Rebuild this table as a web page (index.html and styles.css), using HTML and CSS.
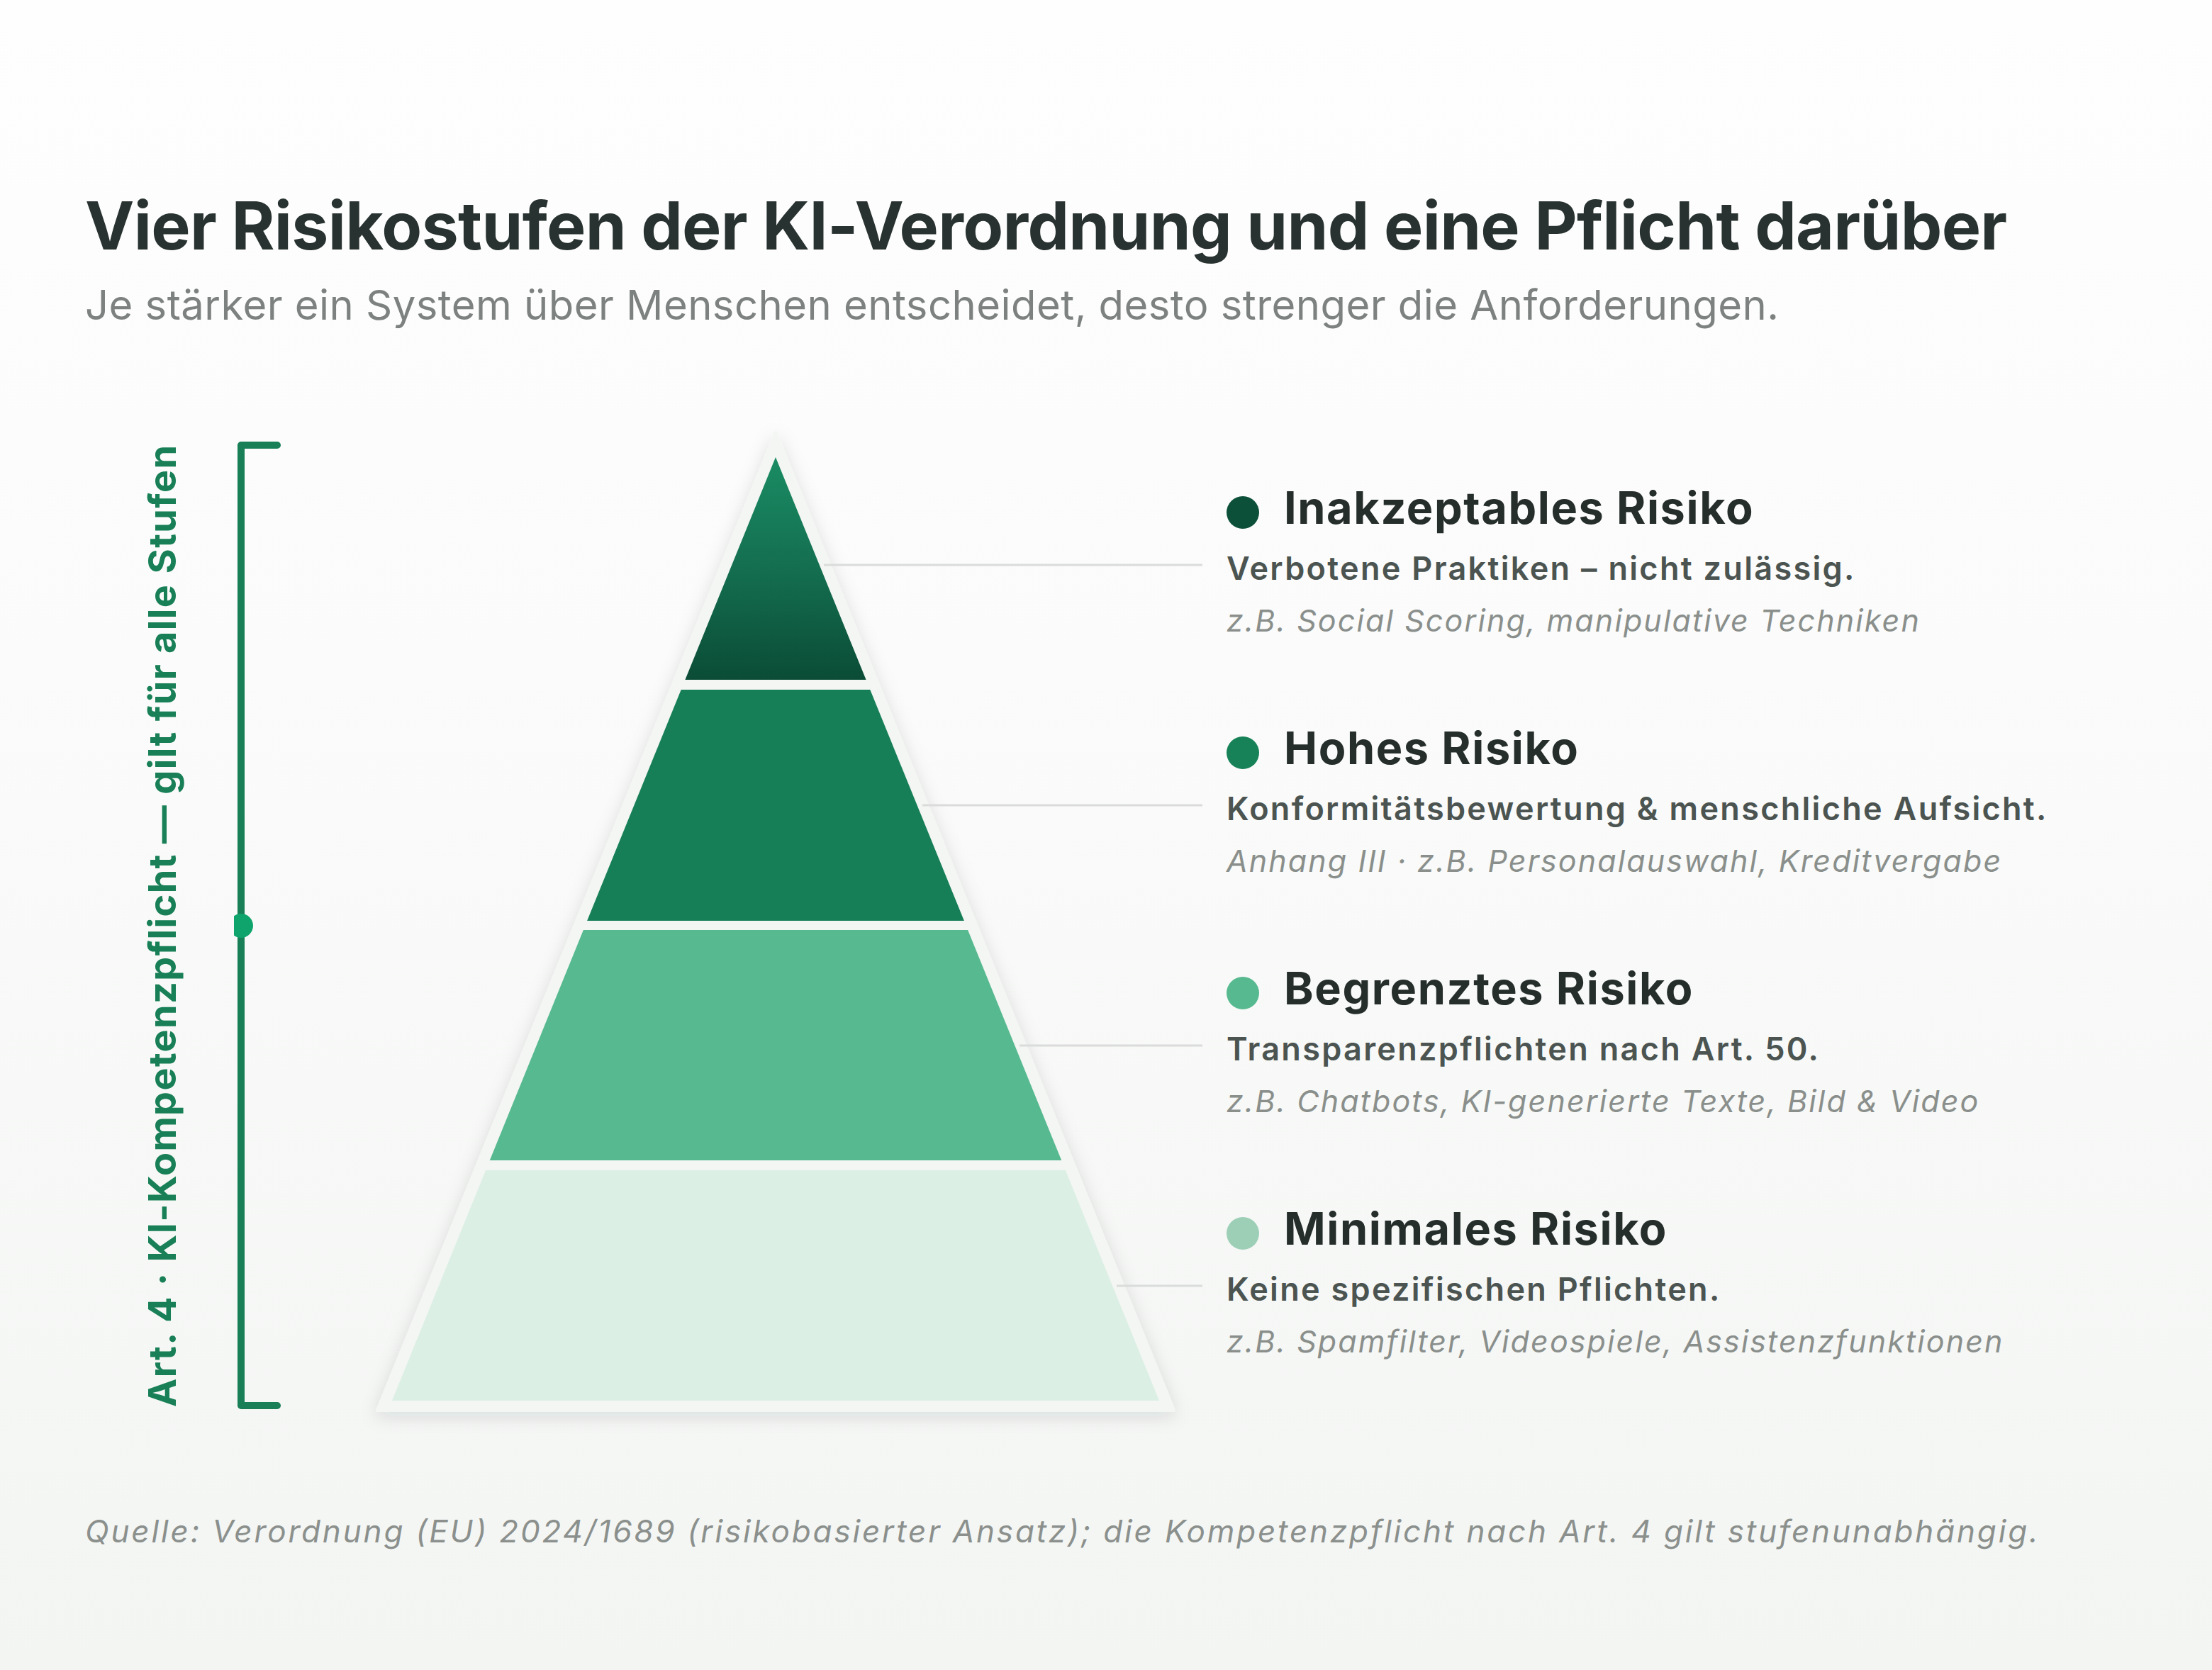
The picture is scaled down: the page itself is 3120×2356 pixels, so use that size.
FILE: index.html
```html
<!DOCTYPE html>
<html lang="de">
<head>
<meta charset="utf-8">
<title>Vier Risikostufen der KI-Verordnung</title>
<link rel="stylesheet" href="styles.css">
</head>
<body>
<div class="page">
  <header class="head">
    <h1 class="title">Vier Risikostufen der KI-Verordnung und eine Pflicht darüber</h1>
    <p class="subtitle">Je stärker ein System über Menschen entscheidet, desto strenger die Anforderungen.</p>
  </header>

  <section class="main">
    <div class="side-label">Art. 4 · KI-Kompetenzpflicht — gilt für alle Stufen</div>

    <svg class="bracket" viewBox="0 0 71 1375" width="71" height="1375" aria-hidden="true">
      <path d="M61 10 H10 V1365 H61" fill="none" stroke="#187f57" stroke-width="10" stroke-linecap="round" stroke-linejoin="round"/>
      <circle cx="10" cy="688" r="17" fill="#0ea46b"/>
    </svg>

    <svg class="pyramid" viewBox="480 590 1240 1440" width="1240" height="1440" aria-hidden="true">
      <defs>
        <linearGradient id="g1" x1="0" y1="645" x2="0" y2="959" gradientUnits="userSpaceOnUse">
          <stop offset="0" stop-color="#1a8c64"/>
          <stop offset="0.55" stop-color="#136b4d"/>
          <stop offset="1" stop-color="#0b4c36"/>
        </linearGradient>
        <filter id="sh" x="-20%" y="-20%" width="140%" height="140%">
          <feDropShadow dx="0" dy="6" stdDeviation="12" flood-color="#1d2b25" flood-opacity="0.13"/>
        </filter>
      </defs>
      <polygon points="1094,610 532,1990 1656,1990" fill="#f3f6f3" stroke="#f3f6f3" stroke-width="4" stroke-linejoin="round" filter="url(#sh)"/>
      <polygon points="1094,645 1221.6,959 966.4,959" fill="url(#g1)"/>
      <polygon points="960.7,973 1227.3,973 1359.9,1299 828.1,1299" fill="#177f58"/>
      <polygon points="822.9,1312 1365.1,1312 1497.2,1637 690.8,1637" fill="#57b98f"/>
      <polygon points="685.1,1651 1502.9,1651 1635,1976 553,1976" fill="#dcefe5"/>
      <g stroke="#d9dcda" stroke-width="3">
        <line x1="1162" y1="797" x2="1696" y2="797"/>
        <line x1="1301" y1="1136" x2="1696" y2="1136"/>
        <line x1="1438" y1="1475" x2="1696" y2="1475"/>
        <line x1="1575" y1="1814" x2="1696" y2="1814"/>
      </g>
    </svg>

    <div class="legend">
      <div class="tier">
        <div class="tier-head"><span class="dot dot-1"></span><span class="tier-name">Inakzeptables Risiko</span></div>
        <p class="tier-desc">Verbotene Praktiken – nicht zulässig.</p>
        <p class="tier-ex">z.B. Social Scoring, manipulative Techniken</p>
      </div>
      <div class="tier">
        <div class="tier-head"><span class="dot dot-2"></span><span class="tier-name">Hohes Risiko</span></div>
        <p class="tier-desc">Konformitätsbewertung &amp; menschliche Aufsicht.</p>
        <p class="tier-ex">Anhang III · z.B. Personalauswahl, Kreditvergabe</p>
      </div>
      <div class="tier">
        <div class="tier-head"><span class="dot dot-3"></span><span class="tier-name">Begrenztes Risiko</span></div>
        <p class="tier-desc">Transparenzpflichten nach Art. 50.</p>
        <p class="tier-ex">z.B. Chatbots, KI-generierte Texte, Bild &amp; Video</p>
      </div>
      <div class="tier">
        <div class="tier-head"><span class="dot dot-4"></span><span class="tier-name">Minimales Risiko</span></div>
        <p class="tier-desc">Keine spezifischen Pflichten.</p>
        <p class="tier-ex">z.B. Spamfilter, Videospiele, Assistenzfunktionen</p>
      </div>
    </div>
  </section>

  <p class="source">Quelle: Verordnung (EU) 2024/1689 (risikobasierter Ansatz); die Kompetenzpflicht nach Art. 4 gilt stufenunabhängig.</p>
</div>
</body>
</html>
```

FILE: styles.css
```css
html, body {
  margin: 0;
  padding: 0;
}

body {
  width: 3120px;
  min-height: 2356px;
  background: linear-gradient(180deg, #fefefe 0%, #fafbfa 40%, #f3f5f3 100%);
  font-family: Inter, "Noto Sans", "DejaVu Sans", sans-serif;
  color: #283230;
}

.page {
  padding: 262px 0 0 120px;
}

.title {
  margin: 0;
  font-size: 93px;
  line-height: 112px;
  font-weight: 700;
  color: #283230;
  letter-spacing: -0.7px;
}

.subtitle {
  margin: 21px 0 0;
  font-size: 58px;
  line-height: 70px;
  font-weight: 400;
  color: #7d8280;
  letter-spacing: 0.45px;
}

.main {
  display: flex;
  align-items: flex-start;
  margin-top: 125px;
  padding-left: 76px;
}

.side-label {
  flex: none;
  width: 65px;
  height: 1365px;
  margin-top: 33px;
  writing-mode: vertical-rl;
  transform: rotate(180deg);
  text-align: center;
  font-size: 54px;
  line-height: 65px;
  font-weight: 700;
  color: #187f57;
  letter-spacing: 1.35px;
  white-space: nowrap;
}

.bracket {
  flex: none;
  display: block;
  margin: 28px 0 0 69px;
}

.pyramid {
  flex: none;
  display: block;
  margin-left: 79px;
}

.legend {
  flex: none;
  margin: 88px 0 0 10px;
}

.tier {
  height: 339px;
}

.tier:last-child {
  height: auto;
}

.tier-head {
  display: flex;
  align-items: flex-start;
}

.dot {
  flex: none;
  width: 46px;
  height: 46px;
  border-radius: 50%;
  margin: 22px 35px 0 0;
}

.dot-1 { background: #0d5039; }
.dot-2 { background: #178258; }
.dot-3 { background: #57b98f; }
.dot-4 { background: #9dcfb7; }

.tier-name {
  font-size: 63px;
  line-height: 76px;
  font-weight: 700;
  color: #252e2b;
  letter-spacing: 1.6px;
  white-space: nowrap;
}

.tier-desc {
  margin: 21px 0 0;
  font-size: 45px;
  line-height: 54px;
  font-weight: 600;
  color: #4b5451;
  letter-spacing: 2.3px;
  white-space: nowrap;
}

.tier-ex {
  margin: 20px 0 0;
  font-size: 43px;
  line-height: 52px;
  font-weight: 400;
  font-style: italic;
  color: #8a8f8c;
  letter-spacing: 2.1px;
  white-space: nowrap;
}

.source {
  margin: 104px 0 0;
  font-size: 44px;
  line-height: 53px;
  font-style: italic;
  font-weight: 400;
  color: #8b908d;
  letter-spacing: 2.83px;
  white-space: nowrap;
}
```
